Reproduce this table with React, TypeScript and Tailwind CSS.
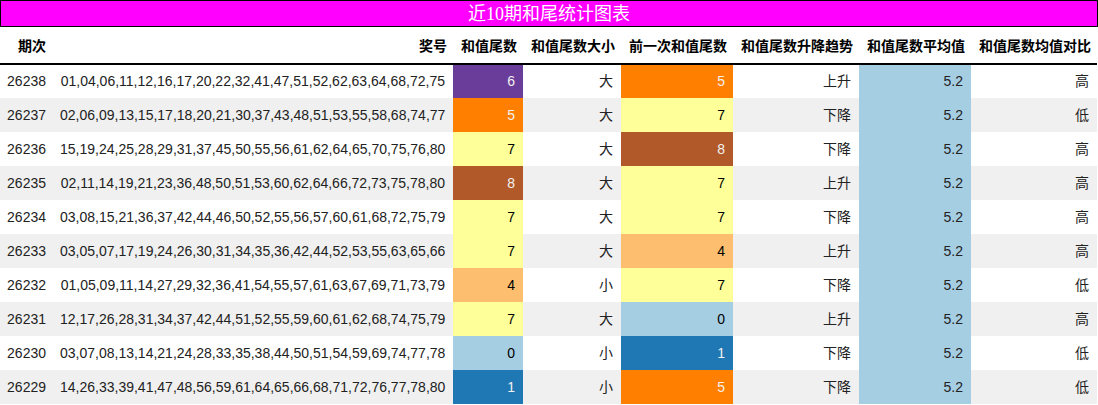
import React from "react";

const colors: Record<number, string> = {
  0: "bg-[#a6cee3] text-black",
  1: "bg-[#1f78b4] text-[#f1f1f1]",
  4: "bg-[#fdbf6f] text-black",
  5: "bg-[#ff7f00] text-[#f1f1f1]",
  6: "bg-[#6a3d9a] text-[#f1f1f1]",
  7: "bg-[#ffff99] text-black",
  8: "bg-[#b15928] text-[#f1f1f1]",
};

const rows = [
  { qi: "26238", nums: "01,04,06,11,12,16,17,20,22,32,41,47,51,52,62,63,64,68,72,75", v: 6, size: "大", prev: 5, trend: "上升", cmp: "高" },
  { qi: "26237", nums: "02,06,09,13,15,17,18,20,21,30,37,43,48,51,53,55,58,68,74,77", v: 5, size: "大", prev: 7, trend: "下降", cmp: "低" },
  { qi: "26236", nums: "15,19,24,25,28,29,31,37,45,50,55,56,61,62,64,65,70,75,76,80", v: 7, size: "大", prev: 8, trend: "下降", cmp: "高" },
  { qi: "26235", nums: "02,11,14,19,21,23,36,48,50,51,53,60,62,64,66,72,73,75,78,80", v: 8, size: "大", prev: 7, trend: "上升", cmp: "高" },
  { qi: "26234", nums: "03,08,15,21,36,37,42,44,46,50,52,55,56,57,60,61,68,72,75,79", v: 7, size: "大", prev: 7, trend: "下降", cmp: "高" },
  { qi: "26233", nums: "03,05,07,17,19,24,26,30,31,34,35,36,42,44,52,53,55,63,65,66", v: 7, size: "大", prev: 4, trend: "上升", cmp: "高" },
  { qi: "26232", nums: "01,05,09,11,14,27,29,32,36,41,54,55,57,61,63,67,69,71,73,79", v: 4, size: "小", prev: 7, trend: "下降", cmp: "低" },
  { qi: "26231", nums: "12,17,26,28,31,34,37,42,44,51,52,55,59,60,61,62,68,74,75,79", v: 7, size: "大", prev: 0, trend: "上升", cmp: "高" },
  { qi: "26230", nums: "03,07,08,13,14,21,24,28,33,35,38,44,50,51,54,59,69,74,77,78", v: 0, size: "小", prev: 1, trend: "下降", cmp: "低" },
  { qi: "26229", nums: "14,26,33,39,41,47,48,56,59,61,64,65,66,68,71,72,76,77,78,80", v: 1, size: "小", prev: 5, trend: "下降", cmp: "低" },
];

const headers = ["期次", "奖号", "和值尾数", "和值尾数大小", "前一次和值尾数", "和值尾数升降趋势", "和值尾数平均值", "和值尾数均值对比"];
const widths = ["w-[52px]", "w-[401px]", "w-[70px]", "w-[98px]", "w-[112px]", "w-[126px]", "w-[112px]", "w-[126px]"];

export default function App() {
  return (
    <div className="w-[1098px] bg-white font-['Liberation_Sans','Noto_Sans_CJK_SC',sans-serif] text-[14px]">
      <div className="h-[27px] border border-black bg-[#ff00ff] flex items-center justify-center text-white text-[18px] leading-none font-['Liberation_Serif','Noto_Sans_CJK_SC',serif]">
        近10期和尾统计图表
      </div>
      <table className="w-[1097px] table-fixed border-collapse">
        <colgroup>
          {widths.map((w, i) => (
            <col key={i} className={w} />
          ))}
        </colgroup>
        <thead>
          <tr className="h-[37px] border-b-2 border-black">
            {headers.map((h) => (
              <th key={h} className="text-right align-bottom pb-[6px] font-bold px-[6px] text-black whitespace-nowrap">
                {h}
              </th>
            ))}
          </tr>
        </thead>
        <tbody>
          {rows.map((r, i) => (
            <tr key={r.qi} className={`h-[34px] text-[#222] ${i % 2 === 1 ? "bg-[#f0f0f0]" : "bg-white"}`}>
              <td className="text-right px-[6px]">{r.qi}</td>
              <td className="text-right px-[8px] whitespace-nowrap">{r.nums}</td>
              <td className={`text-right px-[8px] ${colors[r.v]}`}>{r.v}</td>
              <td className="text-right px-[8px]">{r.size}</td>
              <td className={`text-right px-[8px] ${colors[r.prev]}`}>{r.prev}</td>
              <td className="text-right px-[8px]">{r.trend}</td>
              <td className="text-right px-[8px] bg-[#a6cee3]">5.2</td>
              <td className="text-right px-[8px]">{r.cmp}</td>
            </tr>
          ))}
        </tbody>
      </table>
    </div>
  );
}
